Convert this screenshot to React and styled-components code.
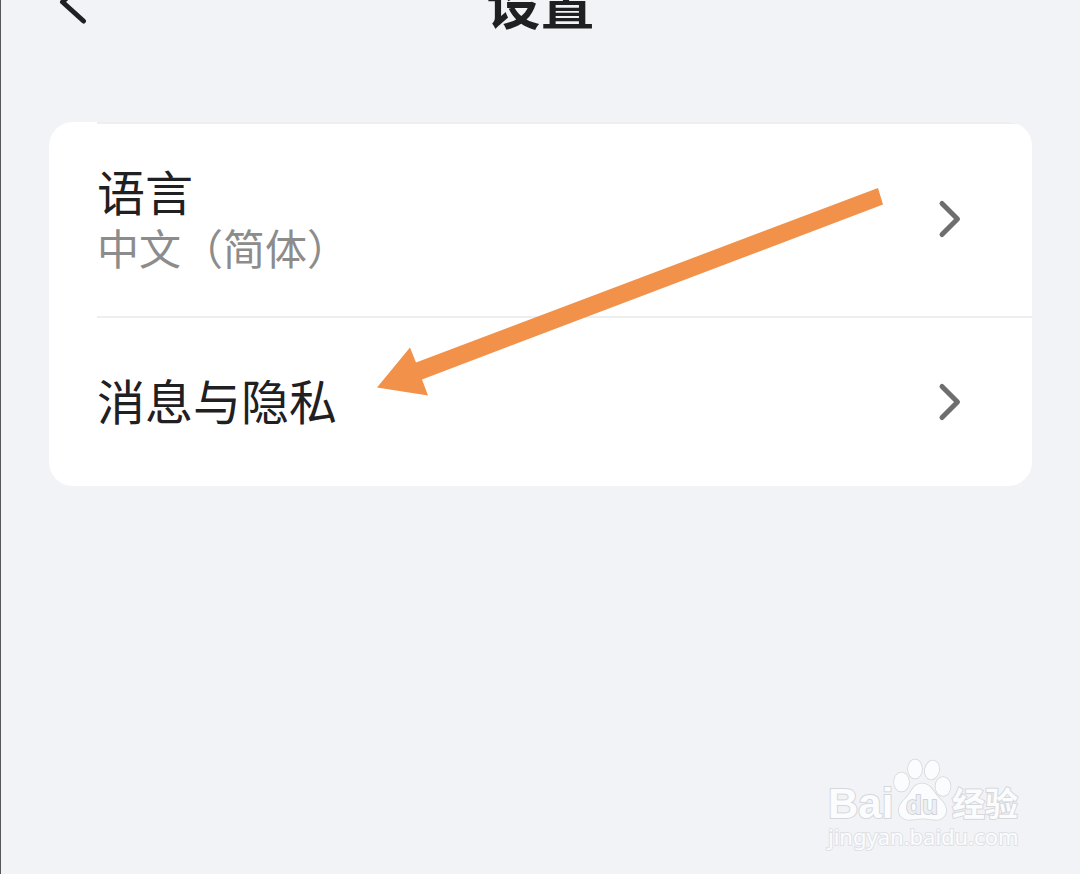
import React from "react";
import styled, { createGlobalStyle } from "styled-components";

const GlobalStyle = createGlobalStyle`
  *, *::before, *::after { box-sizing: border-box; }
  body {
    margin: 0;
    background: #f1f3f7;
    color: #1f2022;
    font-family: "Noto Sans CJK SC", sans-serif;
  }
`;

const Page = styled.div`
  position: relative;
  display: flex;
  flex-direction: column;
  min-height: 100vh;
  border-left: 1px solid #55565a;
  overflow: hidden;
`;

const Header = styled.header`
  display: grid;
  grid-template-columns: 1fr auto 1fr;
  grid-template-rows: 32px;
  align-items: end;
  height: 36px;
  padding: 0 48px;
`;

const BackButton = styled.button`
  display: flex;
  justify-self: start;
  padding: 0;
  border: 0;
  background: none;
  color: inherit;
`;

const Title = styled.h1`
  margin: 0;
  font-size: 54px;
  line-height: 60px;
  font-weight: 700;
`;

const Card = styled.ul`
  list-style: none;
  margin: 86px 48px 0;
  padding: 0;
  border-radius: 24px;
  background: #fff;
  overflow: hidden;
`;

const Item = styled.li`
  padding-left: 48px;

  &:first-child {
    background: linear-gradient(#eceeef, #eceeef) 48px 0 / 100% 2px no-repeat;
  }
`;

const Row = styled.button`
  display: flex;
  align-items: center;
  justify-content: space-between;
  width: 100%;
  height: ${(p) => (p.$tall ? 196 : 168)}px;
  padding: 0 70px 0 0;
  border: 0;
  border-bottom: ${(p) => (p.$tall ? "2px solid #eceeef" : "0")};
  background: none;
  color: inherit;
  font: inherit;
  text-align: left;
`;

const Labels = styled.span`
  display: flex;
  flex-direction: column;
`;

const Label = styled.span`
  padding-bottom: 6px;
  font-size: 48px;
  line-height: 50px;
`;

const Value = styled.span`
  font-size: 42px;
  line-height: 52px;
  color: #8c8c8c;
`;

const Pointer = styled.svg`
  position: absolute;
  top: 188px;
  left: 376px;
  pointer-events: none;
`;

const Watermark = styled.aside`
  position: absolute;
  right: 56px;
  bottom: 28px;
  width: 196px;
  color: #fbfcfe;
  -webkit-text-stroke: 2px #d5d7db;
  paint-order: stroke fill;
`;

const Brand = styled.div`
  display: flex;
  align-items: flex-end;
  height: 68px;
`;

const Latin = styled.span`
  width: 64px;
  font: 700 42px/44px "Liberation Sans", sans-serif;
`;

const Paw = styled.svg`
  flex: none;
  overflow: visible;
`;

const Han = styled.span`
  font-size: 33px;
  line-height: 48px;
  font-weight: 700;
`;

const Site = styled.div`
  font: 400 22px/20px "Noto Sans", sans-serif;
  -webkit-text-stroke-color: #dfe1e5;
`;

const Chevron = () => (
  <svg width="24" height="40" viewBox="0 0 24 40" fill="none" stroke="#6e6e6e" strokeWidth="5" strokeLinecap="round" strokeLinejoin="round" aria-hidden="true">
    <path d="M4 4.500L19.500 20L4 35.500" />
  </svg>
);

export default function App() {
  return (
    <Page>
      <GlobalStyle />
      <Header>
        <BackButton aria-label="返回">
          <svg width="40" height="48" viewBox="0 0 40 48" fill="none" stroke="#1f2022" strokeWidth="5" strokeLinecap="round" strokeLinejoin="round">
            <path d="M34 -2L13.500 18L34.500 37" />
          </svg>
        </BackButton>
        <Title>设置</Title>
      </Header>

      <Card>
        <Item>
          <Row $tall>
            <Labels>
              <Label>语言</Label>
              <Value>中文（简体）</Value>
            </Labels>
            <Chevron />
          </Row>
        </Item>
        <Item>
          <Row>
            <Label>消息与隐私</Label>
            <Chevron />
          </Row>
        </Item>
      </Card>

      <Pointer width="508" height="210" viewBox="0 0 508 210" aria-hidden="true">
        <path d="M0 199.500L33 159.500L39 174.500L501 0L506 16.500L45 191.500L51 207.500Z" fill="#f1914a" />
      </Pointer>

      <Watermark>
        <Brand>
          <Latin>Bai</Latin>
          <Paw width="60" height="68" viewBox="0 0 60 68">
            <g fill="#fbfcfe" stroke="#d5d7db" strokeWidth="1.500">
              <ellipse cx="9.500" cy="24" rx="7.500" ry="9.500" />
              <ellipse cx="23" cy="11" rx="7" ry="9.500" />
              <ellipse cx="40" cy="12" rx="7" ry="9.500" transform="rotate(12 40 12)" />
              <ellipse cx="51" cy="28.500" rx="7.500" ry="9.500" />
              <path d="M30 25.500C39 25.500 41 34 48 41C55 47 56 55 51 59.500C46 64 39 60.500 31 60.500C22 60.500 16 64 10 59.500C5 55 6 47 13 41C20 34 21 25.500 30 25.500Z" />
            </g>
            <text x="30" y="56" textAnchor="middle" fontFamily="Liberation Sans, sans-serif" fontWeight="700" fontSize="26" fill="#eceef2" stroke="#c9cbd0" strokeWidth="1.500">du</text>
          </Paw>
          <Han>经验</Han>
        </Brand>
        <Site>jingyan.baidu.com</Site>
      </Watermark>
    </Page>
  );
}
